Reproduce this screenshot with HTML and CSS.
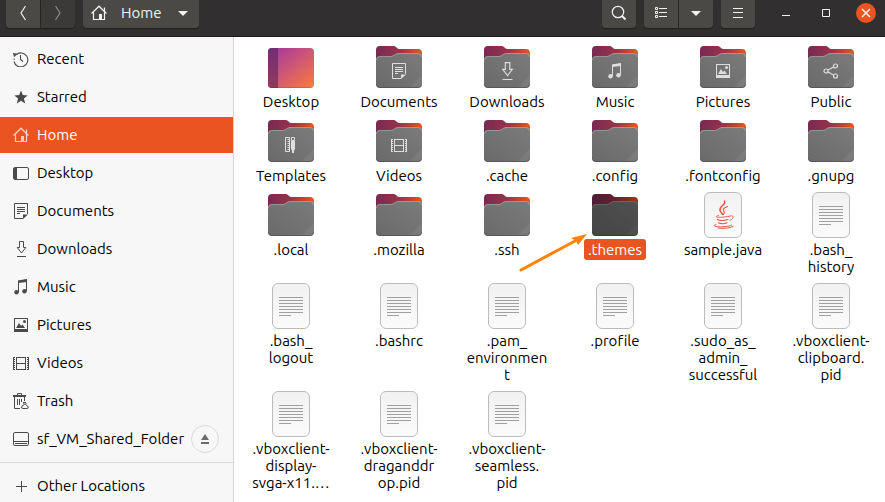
FILE: index.html
```html
<!DOCTYPE html>
<html lang="en">
<head>
<meta charset="utf-8">
<title>Home</title>
<link rel="stylesheet" href="styles.css">
</head>
<body>
<svg class="defs" width="0" height="0" aria-hidden="true">
  <defs>
    <linearGradient id="back" x1="0" y1="0" x2="1" y2="0.15">
      <stop offset="0" stop-color="#772953"/><stop offset="0.5" stop-color="#98324a"/><stop offset="0.75" stop-color="#bf4036"/><stop offset="1" stop-color="#f0561d"/>
    </linearGradient>
    <linearGradient id="front" x1="0" y1="1" x2="1" y2="0">
      <stop offset="0" stop-color="#6a6a6a"/><stop offset="1" stop-color="#7b7b7b"/>
    </linearGradient>
    <linearGradient id="desk" x1="0.1" y1="0" x2="1" y2="1">
      <stop offset="0" stop-color="#a4389c"/><stop offset="0.45" stop-color="#cd5578"/><stop offset="1" stop-color="#fb7c38"/>
    </linearGradient>
    <linearGradient id="strip" x1="0" y1="0" x2="0" y2="1">
      <stop offset="0" stop-color="#742b76"/><stop offset="1" stop-color="#8f3d5c"/>
    </linearGradient>
    <linearGradient id="paper" x1="0" y1="0" x2="0" y2="1">
      <stop offset="0" stop-color="#f1f1f1"/><stop offset="1" stop-color="#fbfbfb"/>
    </linearGradient>
    <clipPath id="deskclip"><rect x="1" y="5" width="46" height="40" rx="4"/></clipPath>
  </defs>
  <symbol id="folder" viewBox="0 0 48 48">
    <path fill="url(#back)" d="M1 7a4 4 0 0 1 4-4h14c2 0 3 3 5 3h19a4 4 0 0 1 4 4v28H1z"/>
    <path fill="url(#front)" d="M1 17a4 4 0 0 1 4-4h11c3 0 4-3 7-3h20a4 4 0 0 1 4 4v27a4 4 0 0 1-4 4H5a4 4 0 0 1-4-4z"/>
    <path fill="none" stroke="#fff" stroke-opacity=".25" d="M1.500 17a3.500 3.500 0 0 1 3.500-3.500h11c3 0 4-3 7-3h20a3.500 3.500 0 0 1 3.500 3.500"/>
    <path fill="none" stroke="#000" stroke-opacity=".2" d="M1.500 41a3.500 3.500 0 0 0 3.500 3.500h38a3.500 3.500 0 0 0 3.500-3.500"/>
    <path fill="#fff" fill-opacity=".06" d="M47 32v9a3 3 0 0 1-3 3H35z"/>
  </symbol>
  <symbol id="desktop" viewBox="0 0 48 48">
    <g clip-path="url(#deskclip)"><rect x="1" y="5" width="46" height="40" fill="url(#desk)"/><rect x="1" y="5" width="10" height="40" fill="url(#strip)"/><path d="M1 44.500h46" stroke="#000" stroke-opacity=".12"/></g>
  </symbol>
  <symbol id="sheet" viewBox="0 0 48 48">
    <rect x="5.500" y="1.500" width="37" height="45" rx="5.500" fill="url(#paper)" stroke="#bcbcbc"/>
  </symbol>
  <symbol id="text" viewBox="0 0 48 48">
    <use href="#sheet"/>
    <path stroke="#a0a0a0" d="M12 15.500h24M12 18.500h24M12 21.500h24M12 24.500h24M12 27.500h24M12 30.500h24M12 33.500h12"/>
  </symbol>
  <symbol id="java" viewBox="0 0 48 48">
    <use href="#sheet"/>
    <g fill="none" stroke="#e3513f" stroke-linecap="round">
      <path stroke-width="1.400" d="M25.500 10c2 4-6 5.500-4.500 9.500.4 1.500 2 2 2.500 4"/>
      <path stroke-width="1.100" d="M28.500 15.500c-4 1.500-5 3-3.500 4.800.8 1.200.5 2-.5 3.200"/>
      <path stroke-width=".9" d="M19.500 24.500c-7 2 2 2.500 11 .7M31 25c4-1.500 4.500 3 0 4.300"/>
      <path stroke-width="1.200" d="M18.500 28.500c2 1.200 7 1 10.500 0M19.500 31.800c2 1 6 1 8.500 0"/>
      <path stroke-width="1" d="M17 33.500c-8 2.500 10 3.500 15.500.7M19 37c5 .8 12 .3 15-1.500"/>
    </g>
  </symbol>

  <symbol id="i-home" viewBox="0 0 16 16">
    <path fill="none" stroke="currentColor" stroke-width="1.200" d="M.5 8.500 8 1.200l7.500 7.300M2.500 7v7.500h11V7M13.500 6V2.500"/><path fill="currentColor" d="M8 9h3v6H8z"/>
  </symbol>
  <symbol id="i-recent" viewBox="0 0 16 16">
    <path fill="none" stroke="currentColor" stroke-width="1.100" d="M3 3.800A7 7 0 1 1 1 10.500M7.500 4v4.500l2.500 2"/><path fill="currentColor" d="M0 2l4.500.8L1 6.300z"/><path stroke="currentColor" d="M1.200 7.500v1.500"/>
  </symbol>
  <symbol id="i-star" viewBox="0 0 16 16"><path fill="currentColor" d="m8 1.500 1.800 4.600 4.900.3-3.800 3.100 1.300 4.900L8 11.700l-4.200 2.700 1.300-4.900-3.800-3.100 4.900-.3z"/></symbol>
  <symbol id="i-desktop" viewBox="0 0 16 16"><rect x=".5" y="2.500" width="15" height="12" rx="1.500" fill="none" stroke="currentColor"/><path fill="currentColor" d="M1 3h3v11H1z"/></symbol>
  <symbol id="i-doc" viewBox="0 0 16 16"><path fill="none" stroke="currentColor" d="M10 15.500H1.500V.5h13V11M4 4.500h8M4 6.500h8M4 8.500h8M4 10.500h3"/><path fill="currentColor" d="M10 16v-4.500h5z"/></symbol>
  <symbol id="i-down" viewBox="0 0 16 16"><path fill="none" stroke="currentColor" d="M6.500.5h4v6h2.300L8.500 12 4.200 6.500h2.300zM4 15.500h9"/></symbol>
  <symbol id="i-music" viewBox="0 0 16 16"><path fill="none" stroke="currentColor" d="M5.500 13V2l8-1v11"/><path fill="currentColor" d="M5 1.500 14 0v3L5 4z"/><circle cx="3.500" cy="13.300" r="2.200" fill="currentColor"/><circle cx="11.500" cy="12.300" r="2.200" fill="currentColor"/></symbol>
  <symbol id="i-pic" viewBox="0 0 16 16"><path fill="currentColor" fill-rule="evenodd" d="M1 1h14v14H1zm1 1v10h12V2z"/><path fill="currentColor" d="m3 11 3-5 2 3 1.500-1.500L12 11z"/><circle cx="11.500" cy="4.500" r="1.500" fill="currentColor"/></symbol>
  <symbol id="i-video" viewBox="0 0 16 16"><path fill="none" stroke="currentColor" d="M3 2.500h10M3 8.500h10M3 14.500h10M3.500 2v13M12.500 2v13"/><path stroke="currentColor" stroke-width="2" stroke-dasharray="1 1" d="M1 2v13M15 2v13"/><path stroke="currentColor" d="M.5 2v13M15.500 2v13"/></symbol>
  <symbol id="i-trash" viewBox="0 0 16 16"><path fill="none" stroke="currentColor" d="M4.500 2V.5h4V2M1.500 4v11.500H7M11.500 4v4M4.500 6v6M6.500 6v6M8.500 6v3"/><path stroke="currentColor" stroke-width="2" d="M0 3h13"/><path fill="none" stroke="currentColor" d="M10 9.500h3M10.500 10l1 1.500-2.500 1.500q-1.500 2.500 1 2.500h4q2 0 1-2l-2.500-2 .8-1.500"/></symbol>
  <symbol id="i-drive" viewBox="0 0 16 16"><rect x=".5" y="1.500" width="15" height="13" rx="1.500" fill="none" stroke="currentColor"/><path stroke="currentColor" d="M1 10.500h14M2 12.500h12"/></symbol>
  <symbol id="i-plus" viewBox="0 0 16 16"><path stroke="currentColor" d="M8.500 3v11M3 8.500h11"/></symbol>
  <symbol id="i-eject" viewBox="0 0 16 16"><path fill="currentColor" d="m8 3 4 6H4zM4 11h8v2H4z"/></symbol>
  <symbol id="i-share" viewBox="0 0 16 16"><g fill="none" stroke="currentColor" stroke-width="1.200"><circle cx="3" cy="8" r="2"/><circle cx="12.500" cy="3" r="2"/><circle cx="12.500" cy="13" r="2"/><path d="m5 7 5.500-3M5 9l5.500 3"/></g></symbol>
  <symbol id="i-template" viewBox="0 0 16 16"><path fill="none" stroke="currentColor" d="M2.500.5h4v14h-4zM4.500 2.500H6M4.500 4.500H6M4.500 6.500H6M4.500 8.500H6M4.500 10.500H6M4.500 12.500H6M8.500.5h3v3h-3z"/><path fill="currentColor" d="M8 4h4v8l-1 1.500V16H9v-2.500L8 12z"/></symbol>
  <symbol id="i-prev" viewBox="0 0 16 16"><path fill="none" stroke="currentColor" stroke-width="1.200" d="M10.500 1 6 8l4.500 7"/></symbol>
  <symbol id="i-next" viewBox="0 0 16 16"><path fill="none" stroke="currentColor" stroke-width="1.200" d="M5.500 1 10 8l-4.500 7"/></symbol>
  <symbol id="i-caret" viewBox="0 0 16 16"><path fill="currentColor" d="M3 6h10l-5 5z"/></symbol>
  <symbol id="i-search" viewBox="0 0 16 16"><circle cx="7" cy="7" r="5.700" fill="none" stroke="currentColor" stroke-width="1.200"/><path stroke="currentColor" stroke-width="2" d="m11 11 3.500 3.500"/></symbol>
  <symbol id="i-list" viewBox="0 0 16 16"><path fill="none" stroke="currentColor" d="M2.500 2.500h2v2h-2zM2.500 6.500h2v2h-2zM2.500 10.500h2v2h-2zM6 3.500h8M6 7.500h8M6 11.500h8"/></symbol>
  <symbol id="i-menu" viewBox="0 0 16 16"><path stroke="currentColor" d="M3 3.500h10M3 7.500h10M3 12.500h10"/></symbol>
  <symbol id="i-min" viewBox="0 0 16 16"><path stroke="currentColor" d="M4 10.500h8"/></symbol>
  <symbol id="i-max" viewBox="0 0 16 16"><path fill="none" stroke="currentColor" d="M4.500 4.500h7v7h-7z"/></symbol>
  <symbol id="i-close" viewBox="0 0 16 16"><path stroke="currentColor" stroke-width="1.500" d="m4 4 8 8M12 4l-8 8"/></symbol>
</svg>

<div class="window">
  <header class="bar">
    <div class="group">
      <button class="tool" aria-label="Back"><svg class="glyph"><use href="#i-prev"/></svg></button>
      <button class="tool" aria-label="Forward" disabled><svg class="glyph"><use href="#i-next"/></svg></button>
    </div>
    <button class="tool path"><svg class="glyph"><use href="#i-home"/></svg><span>Home</span><svg class="glyph"><use href="#i-caret"/></svg></button>
    <div class="spacer"></div>
    <button class="tool" aria-label="Search"><svg class="glyph"><use href="#i-search"/></svg></button>
    <div class="group">
      <button class="tool" aria-label="View as list"><svg class="glyph"><use href="#i-list"/></svg></button>
      <button class="tool" aria-label="View options"><svg class="glyph"><use href="#i-caret"/></svg></button>
    </div>
    <button class="tool" aria-label="Menu"><svg class="glyph"><use href="#i-menu"/></svg></button>
    <div class="controls">
      <button class="control" aria-label="Minimize"><svg class="glyph"><use href="#i-min"/></svg></button>
      <button class="control" aria-label="Maximize"><svg class="glyph"><use href="#i-max"/></svg></button>
      <button class="control close" aria-label="Close"><svg class="glyph"><use href="#i-close"/></svg></button>
    </div>
  </header>

  <div class="body">
    <nav class="places" aria-label="Places">
      <a class="place" href="#recent"><svg class="glyph"><use href="#i-recent"/></svg>Recent</a>
      <a class="place" href="#starred"><svg class="glyph"><use href="#i-star"/></svg>Starred</a>
      <a class="place current" href="#home" aria-current="page"><svg class="glyph"><use href="#i-home"/></svg>Home</a>
      <a class="place" href="#desktop-dir"><svg class="glyph"><use href="#i-desktop"/></svg>Desktop</a>
      <a class="place" href="#documents"><svg class="glyph"><use href="#i-doc"/></svg>Documents</a>
      <a class="place" href="#downloads"><svg class="glyph"><use href="#i-down"/></svg>Downloads</a>
      <a class="place" href="#music"><svg class="glyph"><use href="#i-music"/></svg>Music</a>
      <a class="place" href="#pictures"><svg class="glyph"><use href="#i-pic"/></svg>Pictures</a>
      <a class="place" href="#videos"><svg class="glyph"><use href="#i-video"/></svg>Videos</a>
      <a class="place" href="#trash"><svg class="glyph"><use href="#i-trash"/></svg>Trash</a>
      <div class="mount">
        <a class="place" href="#shared"><svg class="glyph"><use href="#i-drive"/></svg>sf_VM_Shared_Folder</a>
        <button class="eject" aria-label="Eject"><svg class="glyph"><use href="#i-eject"/></svg></button>
      </div>
      <hr class="rule">
      <a class="place" href="#other"><svg class="glyph"><use href="#i-plus"/></svg>Other Locations</a>
    </nav>

    <main class="files">
      <button class="file"><span class="art"><svg class="pic"><use href="#desktop"/></svg></span><span class="name">Desktop</span></button>
      <button class="file"><span class="art"><svg class="pic"><use href="#folder"/></svg><svg class="glyph emblem"><use href="#i-doc"/></svg></span><span class="name">Documents</span></button>
      <button class="file"><span class="art"><svg class="pic"><use href="#folder"/></svg><svg class="glyph emblem large"><use href="#i-down"/></svg></span><span class="name">Downloads</span></button>
      <button class="file"><span class="art"><svg class="pic"><use href="#folder"/></svg><svg class="glyph emblem"><use href="#i-music"/></svg></span><span class="name">Music</span></button>
      <button class="file"><span class="art"><svg class="pic"><use href="#folder"/></svg><svg class="glyph emblem"><use href="#i-pic"/></svg></span><span class="name">Pictures</span></button>
      <button class="file"><span class="art"><svg class="pic"><use href="#folder"/></svg><svg class="glyph emblem"><use href="#i-share"/></svg></span><span class="name">Public</span></button>

      <button class="file"><span class="art"><svg class="pic"><use href="#folder"/></svg><svg class="glyph emblem"><use href="#i-template"/></svg></span><span class="name">Templates</span></button>
      <button class="file"><span class="art"><svg class="pic"><use href="#folder"/></svg><svg class="glyph emblem"><use href="#i-video"/></svg></span><span class="name">Videos</span></button>
      <button class="file"><span class="art"><svg class="pic"><use href="#folder"/></svg></span><span class="name">.cache</span></button>
      <button class="file"><span class="art"><svg class="pic"><use href="#folder"/></svg></span><span class="name">.config</span></button>
      <button class="file"><span class="art"><svg class="pic"><use href="#folder"/></svg></span><span class="name">.fontconfig</span></button>
      <button class="file"><span class="art"><svg class="pic"><use href="#folder"/></svg></span><span class="name">.gnupg</span></button>

      <button class="file"><span class="art"><svg class="pic"><use href="#folder"/></svg></span><span class="name">.local</span></button>
      <button class="file"><span class="art"><svg class="pic"><use href="#folder"/></svg></span><span class="name">.mozilla</span></button>
      <button class="file"><span class="art"><svg class="pic"><use href="#folder"/></svg></span><span class="name">.ssh</span></button>
      <button class="file selected"><span class="art"><svg class="pic"><use href="#folder"/></svg></span><span class="name">.themes</span>
        <svg class="pointer" viewBox="0 0 72 44" aria-hidden="true"><path stroke="#ff8205" stroke-width="3" stroke-linecap="round" d="M3 39 57 10"/><path fill="#ff8205" d="M69 3 60 14l-2-4-5-3z"/></svg></button>
      <button class="file"><span class="art"><svg class="pic"><use href="#java"/></svg></span><span class="name">sample.java</span></button>
      <button class="file"><span class="art"><svg class="pic"><use href="#text"/></svg></span><span class="name">.bash_<br>history</span></button>

      <button class="file"><span class="art"><svg class="pic"><use href="#text"/></svg></span><span class="name">.bash_<br>logout</span></button>
      <button class="file"><span class="art"><svg class="pic"><use href="#text"/></svg></span><span class="name">.bashrc</span></button>
      <button class="file"><span class="art"><svg class="pic"><use href="#text"/></svg></span><span class="name">.pam_<br>environmen<br>t</span></button>
      <button class="file"><span class="art"><svg class="pic"><use href="#text"/></svg></span><span class="name">.profile</span></button>
      <button class="file"><span class="art"><svg class="pic"><use href="#text"/></svg></span><span class="name">.sudo_as_<br>admin_<br>successful</span></button>
      <button class="file"><span class="art"><svg class="pic"><use href="#text"/></svg></span><span class="name">.vboxclient-<br>clipboard.<br>pid</span></button>

      <button class="file"><span class="art"><svg class="pic"><use href="#text"/></svg></span><span class="name">.vboxclient-<br>display-<br>svga-x11.…</span></button>
      <button class="file"><span class="art"><svg class="pic"><use href="#text"/></svg></span><span class="name">.vboxclient-<br>draganddr<br>op.pid</span></button>
      <button class="file"><span class="art"><svg class="pic"><use href="#text"/></svg></span><span class="name">.vboxclient-<br>seamless.<br>pid</span></button>
    </main>
  </div>
</div>
</body>
</html>
```
FILE: styles.css
```css
* {
  box-sizing: border-box;
}

body {
  margin: 0;
  overflow: hidden;
  font: 15px/18px Ubuntu, "Noto Sans", sans-serif;
  font-variant-ligatures: none;
  color: #000;
  background: #fff;
}

button {
  margin: 0;
  padding: 0;
  border: 0;
  background: none;
  font: inherit;
  font-variant-ligatures: none;
  color: inherit;
}

svg {
  display: block;
  flex: none;
}

.defs {
  position: absolute;
}

.glyph {
  width: 16px;
  height: 16px;
}

.window {
  display: flex;
  flex-direction: column;
  height: 100vh;
}

/* Header bar */

.bar {
  display: flex;
  align-items: flex-start;
  gap: 8px;
  padding: 0 9px 8px 6px;
  background: #322f31;
  border-bottom: 1px solid #1d1b1c;
  color: #f2f2f2;
}

.group {
  display: flex;
  gap: 1px;
  background: #2a2829;
}

.tool {
  display: flex;
  align-items: center;
  justify-content: center;
  width: 34px;
  height: 28px;
  padding-bottom: 2px;
  border-radius: 0 0 4px 4px;
  background: #4a4946;
  box-shadow: 0 1px 1px #222021;
}

.group .tool:first-child {
  border-radius: 0 0 0 4px;
}

.group .tool:last-child {
  border-radius: 0 0 4px 0;
}

.tool:disabled {
  background: #3b3a39;
  color: #8d8c8b;
}

.path {
  gap: 14px;
  width: auto;
  padding: 0 8px 2px;
}

.spacer {
  flex: 1;
}

.controls {
  display: flex;
  gap: 20px;
  padding: 3px 0 0 13px;
}

.control {
  display: grid;
  place-items: center;
  width: 20px;
  height: 20px;
  border-radius: 50%;
}

.close {
  background: #e95420;
}

/* Sidebar */

.body {
  display: flex;
  flex: 1;
  min-height: 0;
}

.places {
  display: flex;
  flex: none;
  flex-direction: column;
  gap: 2px;
  width: 234px;
  padding-top: 4px;
  overflow: hidden;
  background: #f7f7f7;
  border-right: 1px solid #d5d5d5;
}

.place {
  display: flex;
  flex: none;
  align-items: center;
  gap: 8px;
  height: 36px;
  padding-left: 13px;
  color: inherit;
  text-decoration: none;
}

.place .glyph {
  color: #4a4a4a;
}

.current {
  background: #e95420;
  color: #fff;
}

.current .glyph {
  color: #fbd0c0;
}

.mount {
  display: flex;
  flex: none;
  align-items: center;
  justify-content: space-between;
  padding-right: 14px;
}

.eject {
  display: grid;
  place-items: center;
  width: 28px;
  height: 28px;
  border: 1px solid #dadada;
  border-radius: 50%;
  color: #6b6b6b;
}

.rule {
  flex: none;
  width: 100%;
  height: 1px;
  margin: 3px 0;
  border: 0;
  background: #dadada;
}

/* Icon view */

.files {
  display: grid;
  flex: 1;
  grid-template-columns: repeat(auto-fill, minmax(108px, 1fr));
  align-content: start;
  gap: 5px 0;
  padding: 6px 0 0 3px;
  overflow: hidden;
}

.file {
  position: relative;
  display: flex;
  flex-direction: column;
  align-items: center;
}

.art {
  display: grid;
  place-items: center;
}

.art > * {
  grid-area: 1 / 1;
}

.pic {
  width: 48px;
  height: 48px;
}

.emblem {
  margin-top: 8px;
  color: #dedede;
}

.large {
  width: 18px;
  height: 18px;
}

.name {
  padding: 2px 4px;
  border-radius: 3px;
  line-height: 17px;
}

.selected .name {
  background: #e95420;
  color: #fff;
}

.selected .pic {
  filter: brightness(0.65);
}

.pointer {
  position: absolute;
  top: 40px;
  left: -43px;
  width: 72px;
  height: 44px;
}
```
